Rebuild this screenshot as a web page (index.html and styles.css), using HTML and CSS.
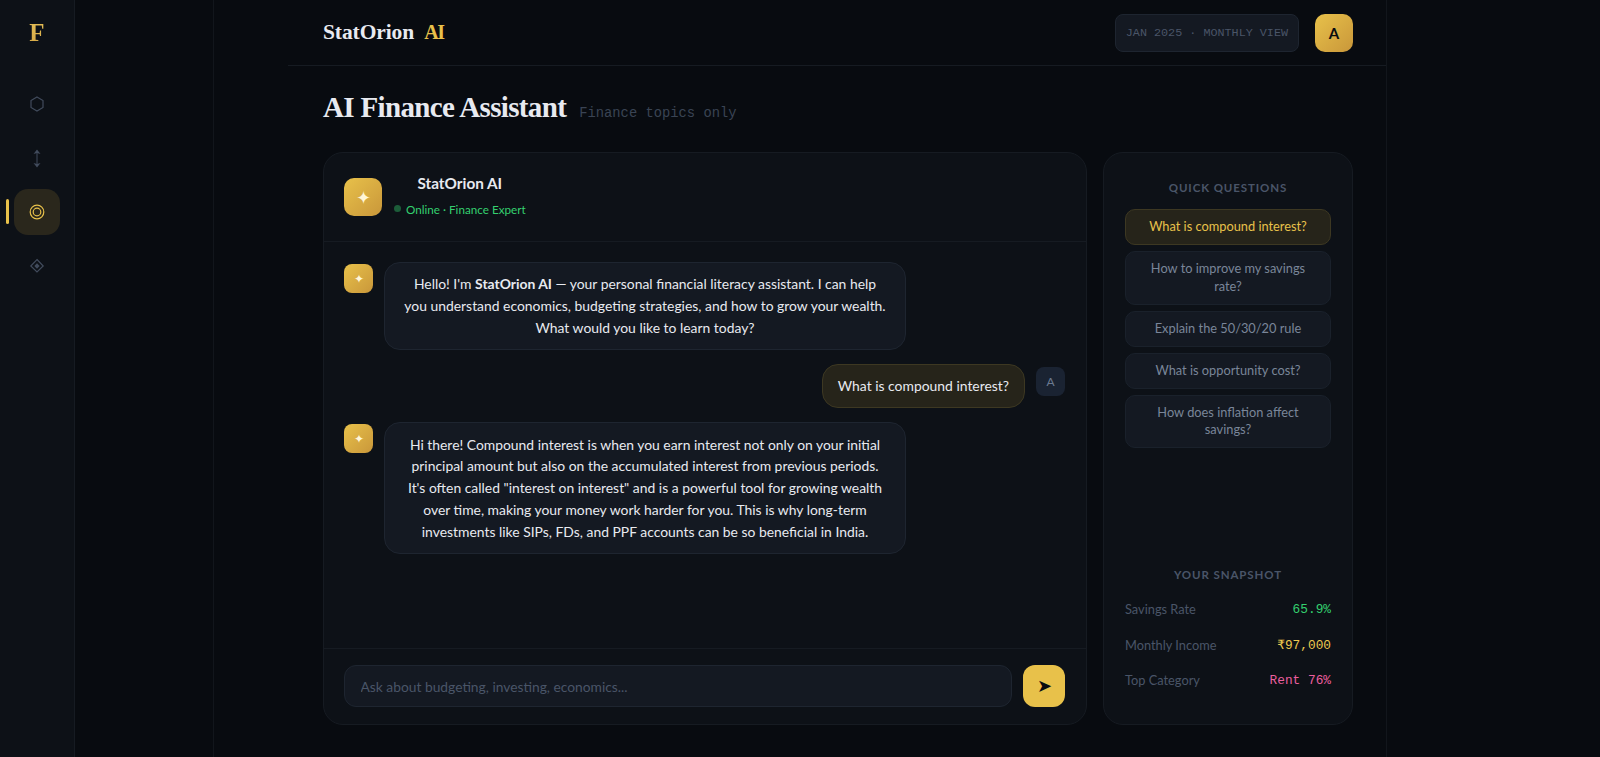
FILE: index.html
```html
<!DOCTYPE html>
<html lang="en">
<head>
    <meta charset="UTF-8">
    <meta name="viewport" content="width=device-width, initial-scale=1.0">
    <title>StatOrion AI - Assistant</title>
    <link rel="stylesheet" href="styles.css">
</head>
<body>
    <aside class="sidebar">
        <div class="side-logo">F</div>
        <nav class="side-nav">
            <a class="side-item">
                <svg viewBox="0 0 20 20" width="20" height="20"><path d="M10 3 L16 6.5 V13.5 L10 17 L4 13.5 V6.5 Z" fill="none" stroke="currentColor" stroke-width="1.2"/></svg>
            </a>
            <a class="side-item">
                <svg viewBox="0 0 20 20" width="20" height="20"><path d="M10 3 V18" stroke="currentColor" stroke-width="1"/><path d="M6.5 6 L10 1.5 L13.5 6 L10 5 Z M6.5 15 L10 19.5 L13.5 15 L10 16 Z" fill="currentColor"/></svg>
            </a>
            <a class="side-item ativo">
                <svg viewBox="0 0 20 20" width="20" height="20"><circle cx="10" cy="10" r="6.8" fill="none" stroke="currentColor" stroke-width="1.2"/><circle cx="10" cy="10" r="3.8" fill="none" stroke="currentColor" stroke-width="1.2"/></svg>
            </a>
            <a class="side-item">
                <svg viewBox="0 0 20 20" width="20" height="20"><path d="M10 3.5 L16.2 10 L10 16 L3.8 10 Z" fill="none" stroke="currentColor" stroke-width="1.2"/><path d="M10 7.3 L12.7 10 L10 12.7 L7.3 10 Z" fill="currentColor"/></svg>
            </a>
        </nav>
    </aside>

    <main class="main">
        <div class="wrap">
            <header class="topbar">
                <div class="brand">StatOrion <span>AI</span></div>
                <div class="topbar-right">
                    <div class="chip">JAN 2025 · MONTHLY VIEW</div>
                    <div class="avatar">A</div>
                </div>
            </header>

            <div class="content">
                <div class="page-title">
                    <h1>AI Finance Assistant</h1>
                    <span>Finance topics only</span>
                </div>

                <div class="columns">
                    <section class="chat card">
                        <div class="chat-head">
                            <div class="bot-icon">&#10022;</div>
                            <div class="bot-info">
                                <div class="bot-name">StatOrion AI</div>
                                <div class="bot-status"><i></i>Online · Finance Expert</div>
                            </div>
                        </div>

                        <div class="messages">
                            <div class="msg">
                                <div class="msg-icon">&#10022;</div>
                                <div class="bubble">Hello! I'm <b>StatOrion AI</b> — your personal financial literacy assistant. I can help you understand economics, budgeting strategies, and how to grow your wealth. What would you like to learn today?</div>
                            </div>
                            <div class="msg user">
                                <div class="bubble">What is compound interest?</div>
                                <div class="msg-icon">A</div>
                            </div>
                            <div class="msg">
                                <div class="msg-icon">&#10022;</div>
                                <div class="bubble">Hi there! Compound interest is when you earn interest not only on your initial principal amount but also on the accumulated interest from previous periods. It's often called "interest on interest" and is a powerful tool for growing wealth over time, making your money work harder for you. This is why long-term investments like SIPs, FDs, and PPF accounts can be so beneficial in India.</div>
                            </div>
                        </div>

                        <div class="chat-input">
                            <input type="text" placeholder="Ask about budgeting, investing, economics...">
                            <button class="send">&#10148;</button>
                        </div>
                    </section>

                    <aside class="side-panel card">
                        <h3>QUICK QUESTIONS</h3>
                        <div class="questions">
                            <button class="ativo">What is compound interest?</button>
                            <button>How to improve my savings rate?</button>
                            <button>Explain the 50/30/20 rule</button>
                            <button>What is opportunity cost?</button>
                            <button>How does inflation affect savings?</button>
                        </div>

                        <div class="snapshot">
                            <h3>YOUR SNAPSHOT</h3>
                            <div class="snap-row"><span>Savings Rate</span><b class="verde">65.9%</b></div>
                            <div class="snap-row"><span>Monthly Income</span><b class="ouro">₹97,000</b></div>
                            <div class="snap-row"><span>Top Category</span><b class="rosa">Rent 76%</b></div>
                        </div>
                    </aside>
                </div>
            </div>
        </div>
    </main>
</body>
</html>
```

FILE: styles.css
```css
* {
    box-sizing: border-box;
}

body {
    margin: 0;
    height: 100vh;
    display: flex;
    overflow: hidden;
    background: #080b10;
    color: #e8eaf0;
    font-family: 'Lato', 'Noto Sans', sans-serif;
    text-align: center;
}

/* Sidebar */
.sidebar {
    width: 75px;
    flex-shrink: 0;
    background: #0d1117;
    border-right: 1px solid #161b22;
    display: flex;
    flex-direction: column;
    align-items: center;
}

.side-logo {
    height: 66px;
    line-height: 66px;
    font-family: 'Liberation Serif', serif;
    font-weight: bold;
    font-size: 25px;
    background: linear-gradient(180deg, #f0cf63, #c9973a);
    -webkit-background-clip: text;
    background-clip: text;
    color: transparent;
}

.side-nav {
    margin-top: 15px;
    display: flex;
    flex-direction: column;
    gap: 8px;
}

.side-item {
    position: relative;
    width: 46px;
    height: 46px;
    border-radius: 14px;
    display: flex;
    align-items: center;
    justify-content: center;
    color: #414b5c;
}

.side-item.ativo {
    background: #2a271c;
    color: #e8c14a;
}

.side-item.ativo::before {
    content: "";
    position: absolute;
    left: -8px;
    top: 10px;
    width: 3px;
    height: 25px;
    border-radius: 2px;
    background: #e8c14a;
}

/* Main */
.main {
    flex: 1;
    min-width: 0;
    display: flex;
    justify-content: center;
    background: linear-gradient(#12161c, #12161c) no-repeat 138px 0 / 1px 100%;
}

.wrap {
    width: 1099px;
    height: 100%;
    display: flex;
    flex-direction: column;
    border-right: 1px solid #12161c;
}

.topbar {
    height: 66px;
    flex-shrink: 0;
    padding: 0 33px 0 35px;
    display: flex;
    align-items: center;
    justify-content: space-between;
    border-bottom: 1px solid #161b22;
}

.brand {
    font-family: 'Liberation Serif', serif;
    font-weight: bold;
    font-size: 21.5px;
    letter-spacing: -0.1px;
    color: #e8eaf0;
}

.brand span {
    margin-left: 5px;
    font-size: 20px;
    letter-spacing: -1.5px;
    color: #e8c14a;
}

.topbar-right {
    display: flex;
    align-items: center;
    gap: 16px;
}

.chip {
    height: 38px;
    padding: 0 10px;
    display: flex;
    align-items: center;
    background: #141922;
    border: 1px solid #1e2530;
    border-radius: 8px;
    font-family: 'Liberation Mono', monospace;
    font-size: 11.75px;
    color: #4a5568;
}

.avatar {
    width: 38px;
    height: 38px;
    border-radius: 10px;
    display: flex;
    align-items: center;
    justify-content: center;
    background: linear-gradient(135deg, #e8c14a, #c9973a);
    color: #080b10;
    font-weight: bold;
    font-size: 15px;
}

.content {
    flex: 1;
    min-height: 0;
    padding: 0 33px 32px 35px;
    display: flex;
    flex-direction: column;
}

.page-title {
    height: 86px;
    padding-top: 25px;
    display: flex;
    align-items: baseline;
    gap: 13px;
    flex-shrink: 0;
}

.page-title h1 {
    margin: 0;
    font-family: 'Liberation Serif', serif;
    font-size: 29px;
    letter-spacing: -0.65px;
    font-weight: bold;
}

.page-title span {
    font-family: 'Liberation Mono', monospace;
    font-size: 13.8px;
    color: #3a4454;
}

.columns {
    flex: 1;
    min-height: 0;
    display: flex;
    gap: 16px;
}

.card {
    background: #0d1117;
    border: 1px solid #161b22;
    border-radius: 20px;
}

/* Chat */
.chat {
    flex: 1;
    min-width: 0;
    display: flex;
    flex-direction: column;
}

.chat-head {
    height: 89px;
    padding: 0 20px;
    display: flex;
    align-items: center;
    gap: 12px;
    border-bottom: 1px solid #161b22;
}

.bot-icon {
    width: 38px;
    height: 38px;
    border-radius: 10px;
    display: flex;
    align-items: center;
    justify-content: center;
    background: linear-gradient(135deg, #e8c14a, #c9973a);
    color: #fff6d8;
    font-size: 18px;
}

.bot-info {
    padding-bottom: 7px;
}

.bot-name {
    font-weight: bold;
    font-size: 15.3px;
    line-height: 22px;
    margin-bottom: 8px;
}

.bot-status {
    display: flex;
    align-items: center;
    gap: 5px;
    font-size: 11.7px;
    color: #34d06f;
}

.bot-status i {
    width: 7px;
    height: 7px;
    border-radius: 50%;
    background: #34d06f;
    opacity: 0.4;
}

.messages {
    flex: 1;
    min-height: 0;
    padding: 20px 21px 20px 20px;
    display: flex;
    flex-direction: column;
    gap: 14px;
}

.msg {
    display: flex;
    align-items: flex-start;
    gap: 11px;
}

.msg.user {
    justify-content: flex-end;
}

.msg-icon {
    width: 29px;
    height: 29px;
    margin-top: 2px;
    flex-shrink: 0;
    border-radius: 8px;
    display: flex;
    align-items: center;
    justify-content: center;
    background: linear-gradient(135deg, #e8c14a, #c9973a);
    color: #fff6d8;
    font-size: 12px;
}

.msg.user .msg-icon {
    background: #1a2332;
    color: #6b7a90;
    margin-top: 3px;
}

.bubble {
    width: 522px;
    padding: 10.4px 18px;
    background: #141922;
    border: 1px solid #1e2530;
    border-radius: 16px;
    font-size: 13.9px;
    line-height: 21.7px;
    color: #e8eaf0;
}

.msg.user .bubble {
    width: auto;
    padding: 10.4px 15px;
    background: #26241a;
    border-color: #3d3822;
}

.chat-input {
    padding: 16px 21px 17px 20px;
    display: flex;
    gap: 11px;
    border-top: 1px solid #161b22;
}

.chat-input input {
    flex: 1;
    min-width: 0;
    height: 42px;
    padding: 0 15.5px;
    background: #141922;
    border: 1px solid #1e2530;
    border-radius: 12px;
    font-family: inherit;
    font-size: 13.8px;
    color: #e8eaf0;
}

.chat-input input::placeholder {
    color: #4a5568;
}

.send {
    width: 42px;
    height: 42px;
    padding: 0;
    border: none;
    border-radius: 12px;
    background: #e8c14a;
    color: #080b10;
    font-size: 18px;
}

/* Side panel */
.side-panel {
    width: 250px;
    flex-shrink: 0;
    padding: 28px 21px 26px;
    display: flex;
    flex-direction: column;
}

.side-panel h3 {
    margin: 0;
    font-size: 11.5px;
    font-weight: bold;
    letter-spacing: 0.9px;
    color: #4a5568;
}

.questions {
    margin-top: 15px;
    display: flex;
    flex-direction: column;
    gap: 6px;
}

.questions button {
    padding: 8px 12px;
    background: #141922;
    border: 1px solid #1a212b;
    border-radius: 10px;
    font-family: inherit;
    font-size: 12.8px;
    line-height: 1.4;
    color: #7a8699;
}

.questions button.ativo {
    background: #26241a;
    border-color: #3d3822;
    color: #e8c14a;
}

.snapshot {
    margin-top: auto;
}

.snap-row {
    height: 35.5px;
    display: flex;
    align-items: center;
    justify-content: space-between;
    font-size: 12.8px;
    color: #4a5568;
}

.snapshot h3 {
    margin-bottom: 11px;
}

.snap-row b {
    font-family: 'Liberation Mono', monospace;
    font-weight: normal;
}

.verde {
    color: #34d06f;
}

.ouro {
    color: #eec94f;
}

.rosa {
    color: #ec5f9f;
}
```
